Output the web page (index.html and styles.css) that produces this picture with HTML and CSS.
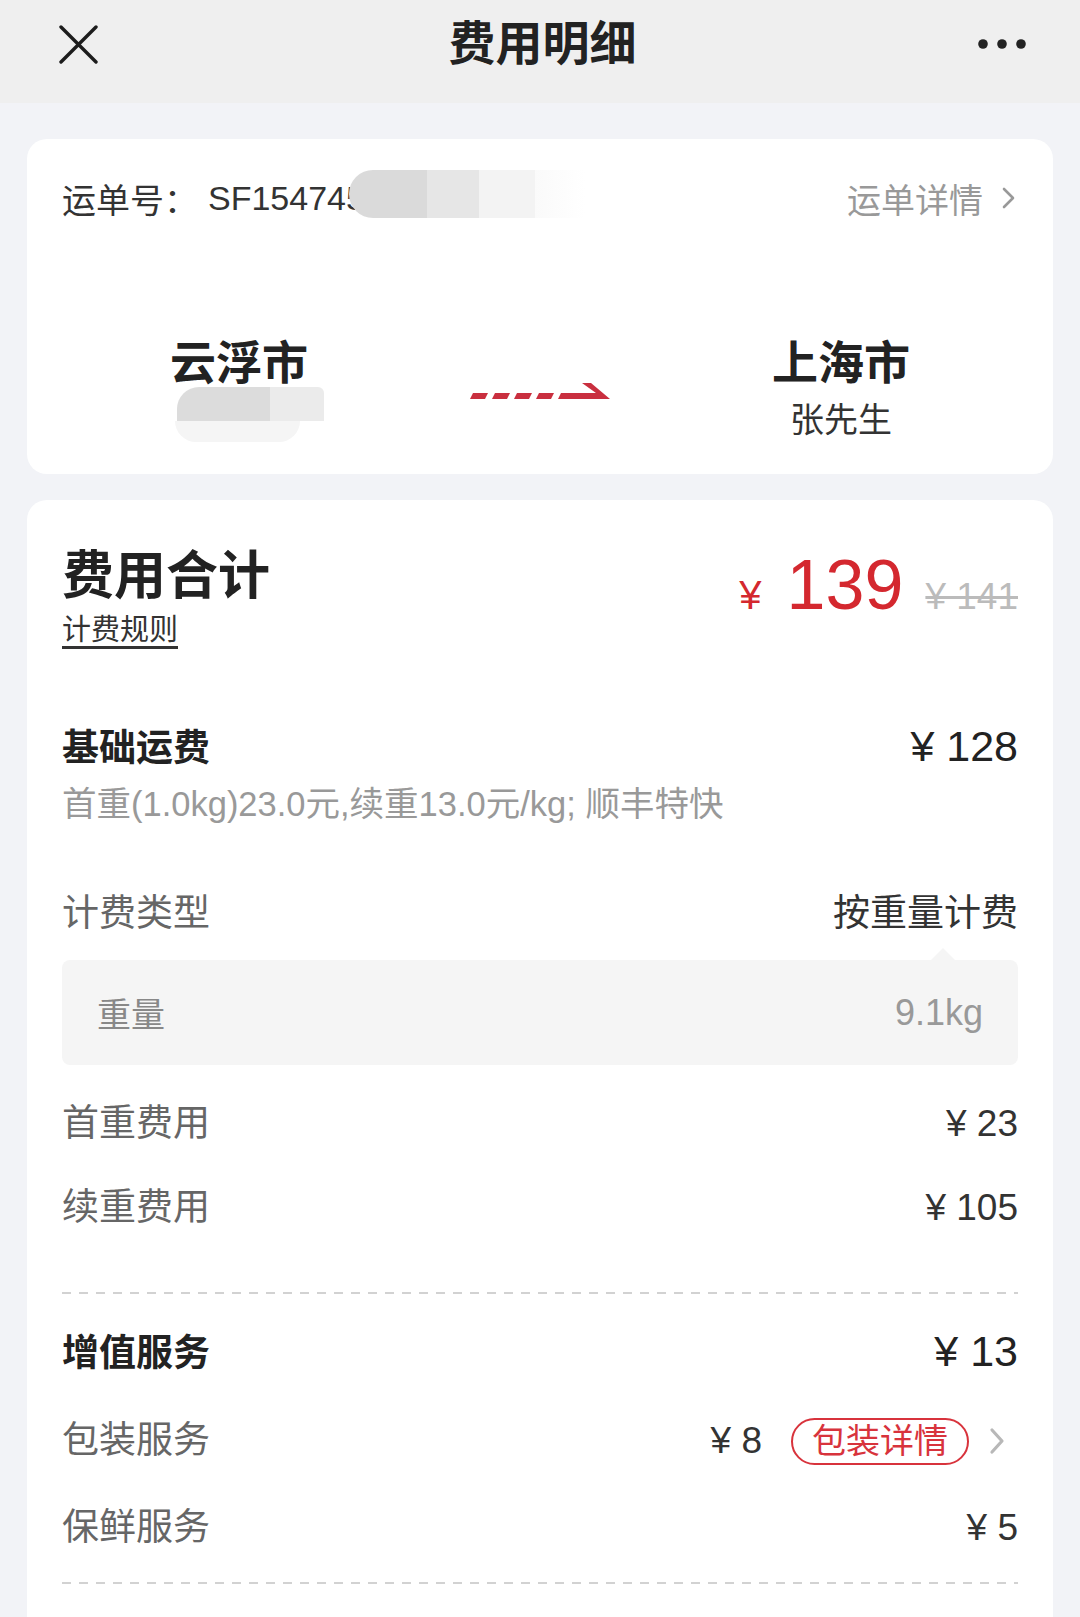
FILE: index.html
```html
<!DOCTYPE html>
<html lang="zh-CN">
<head>
<meta charset="utf-8">
<title>费用明细</title>
<link rel="stylesheet" href="styles.css">
</head>
<body>
<header class="topbar">
  <div class="topbar-row">
    <svg class="icon-close" width="39" height="39" viewBox="0 0 39 39"><path d="M2 2 L37 37 M37 2 L2 37" stroke="#1c1c1c" stroke-width="3.4" stroke-linecap="round" fill="none"/></svg>
    <h1 class="title">费用明细</h1>
    <svg class="icon-more" width="48" height="10" viewBox="0 0 48 10"><circle cx="5" cy="5" r="4.8" fill="#222"/><circle cx="24" cy="5" r="4.8" fill="#222"/><circle cx="43" cy="5" r="4.8" fill="#222"/></svg>
  </div>
</header>

<section class="card card-waybill">
  <div class="waybill-row">
    <div class="waybill-no">
      <span class="waybill-label">运单号：</span><span class="waybill-num">SF154745</span><span class="mask mask-no"></span>
    </div>
    <a class="waybill-link">运单详情<svg class="chev" width="14" height="24" viewBox="0 0 14 24"><polyline points="2,3 11,12 2,21" fill="none" stroke="#999" stroke-width="2.6" stroke-linecap="round" stroke-linejoin="round"/></svg></a>
  </div>
  <div class="route">
    <div class="route-end">
      <div class="city">云浮市</div>
      <span class="mask mask-a"></span>
      <span class="mask mask-b"></span>
    </div>
    <div class="route-arrow">
      <svg width="140" height="18" viewBox="0 0 140 18"><g fill="#c92f3f"><polygon points="3,11 18,11 15,17 0,17"/><polygon points="25,11 40,11 37,17 22,17"/><polygon points="47,11 62,11 59,17 44,17"/><polygon points="69,11 84,11 81,17 66,17"/><polygon points="91,11 126,11 112,1 121,1 140,17 88,17"/></g></svg>
    </div>
    <div class="route-end">
      <div class="city">上海市</div>
      <div class="person">张先生</div>
    </div>
  </div>
</section>

<section class="card card-fee">
  <div class="total">
    <div class="total-left">
      <div class="total-title">费用合计</div>
      <a class="rule">计费规则</a>
    </div>
    <div class="total-price">
      <span class="cur">¥</span><span class="big">139</span><span class="orig">¥ 141</span>
    </div>
  </div>

  <div class="row mt-base"><span class="label-strong">基础运费</span><span class="amt-strong">¥ 128</span></div>
  <div class="desc">首重(1.0kg)23.0元,续重13.0元/kg; 顺丰特快</div>

  <div class="row mt-type"><span class="label">计费类型</span><span class="value">按重量计费</span></div>
  <div class="weight-box"><span class="weight-label">重量</span><span class="weight-value">9.1kg</span></div>

  <div class="row mt-34"><span class="label">首重费用</span><span class="amt">¥ 23</span></div>
  <div class="row mt-34"><span class="label">续重费用</span><span class="amt">¥ 105</span></div>

  <div class="dash mt-dash1"></div>

  <div class="row mt-added"><span class="label-strong">增值服务</span><span class="amt-strong">¥ 13</span></div>
  <div class="row row-center mt-pack">
    <span class="label">包装服务</span>
    <span class="pack-right"><span class="amt">¥ 8</span><span class="pill">包装详情</span><svg class="pack-chev" width="18" height="30" viewBox="0 0 18 30"><polyline points="4,4 14,15 4,26" fill="none" stroke="#b8b8b8" stroke-width="3.2" stroke-linecap="round" stroke-linejoin="round"/></svg></span>
  </div>
  <div class="row mt-fresh"><span class="label">保鲜服务</span><span class="amt">¥ 5</span></div>

  <div class="dash mt-dash2"></div>
</section>
</body>
</html>
```

FILE: styles.css
```css
html, body {
  margin: 0;
  padding: 0;
}

body {
  background: #f2f3f7;
  font-family: "Liberation Sans", "Noto Sans CJK SC", sans-serif;
  color: #333;
}

.topbar {
  background: #efefef;
  height: 103px;
}

.topbar-row {
  height: 88px;
  display: grid;
  grid-template-columns: 1fr auto 1fr;
  align-items: center;
  padding: 0 54px 0 59px;
}

.title {
  margin: 0;
  font-size: 47px;
  line-height: 60px;
  font-weight: 700;
  color: #222;
}

.icon-close {
  justify-self: start;
}

.icon-more {
  justify-self: end;
}

.card {
  background: #fff;
  border-radius: 20px;
  margin: 0 27px;
  padding: 0 35px;
}

.card-waybill {
  margin-top: 36px;
  padding-top: 35px;
  padding-bottom: 32px;
}

.waybill-row {
  display: flex;
  justify-content: space-between;
  align-items: center;
  height: 48px;
}

.waybill-no {
  display: flex;
  align-items: center;
  font-size: 34px;
  color: #333;
}

.waybill-num {
  margin-left: 10px;
}

.mask-no {
  display: block;
  width: 236px;
  height: 48px;
  margin-left: -16px;
  margin-top: -8px;
  background: linear-gradient(90deg, #dadada 0 78px, #e6e6e6 78px 130px, #f3f3f3 130px 186px, #fafafa 186px, rgba(255, 255, 255, 0) 236px);
  border-radius: 24px 0 0 24px;
}

.waybill-link {
  display: flex;
  align-items: center;
  font-size: 34px;
  color: #999;
  text-decoration: none;
  margin-right: 2px;
}

.chev {
  margin-left: 19px;
}

.route {
  display: grid;
  grid-template-columns: 1fr 200px 1fr;
  grid-template-rows: 109px;
  margin: 111px -24px 0;
}

.route-end {
  display: flex;
  flex-direction: column;
  align-items: center;
}

.city {
  font-size: 46px;
  line-height: 60px;
  font-weight: 700;
  color: #222;
}

.person {
  font-size: 34px;
  line-height: 44px;
  margin-top: 5px;
  color: #333;
}

.mask-a {
  display: block;
  width: 147px;
  height: 52px;
  margin-top: -6px;
  margin-left: 23px;
  background: linear-gradient(90deg, #dcdcdc 0 63%, #ebebeb 63%);
  border-radius: 22px 6px 0 0;
}

.mask-b {
  display: block;
  width: 125px;
  height: 32px;
  margin-left: -3px;
  background: #f5f5f5;
  border-radius: 0 0 40px 40px;
}

.route-arrow {
  display: flex;
  justify-content: center;
  align-items: flex-start;
  padding-top: 49px;
}

.card-fee {
  margin-top: 26px;
  padding-top: 44px;
  padding-bottom: 80px;
}

.total {
  display: flex;
  justify-content: space-between;
  align-items: flex-start;
}

.total-left {
  display: flex;
  flex-direction: column;
  align-items: flex-start;
}

.total-title {
  font-size: 52px;
  line-height: 64px;
  font-weight: 700;
  color: #222;
}

.rule {
  font-size: 29px;
  line-height: 32px;
  margin-top: 6px;
  border-bottom: 3px solid #333;
  color: #333;
}

.total-price {
  display: flex;
  align-items: baseline;
  margin-top: 6px;
}

.cur {
  font-size: 40px;
  color: #d4282f;
}

.big {
  font-size: 70px;
  line-height: 70px;
  color: #d4282f;
  margin-left: 25px;
}

.orig {
  font-size: 37px;
  color: #bbb;
  text-decoration: line-through;
  margin-left: 22px;
}

.row {
  display: flex;
  justify-content: space-between;
  align-items: baseline;
  line-height: 50px;
}

.row-center {
  align-items: center;
}

.label {
  font-size: 37px;
  color: #666;
}

.label-strong {
  font-size: 37px;
  font-weight: 700;
  color: #222;
}

.value {
  font-size: 37px;
  color: #333;
}

.amt {
  font-size: 37px;
  color: #333;
}

.amt-strong {
  font-size: 43px;
  color: #222;
}

.desc {
  font-size: 34.5px;
  line-height: 44px;
  color: #999;
  margin-top: 8px;
}

.mt-base { margin-top: 72px; }
.mt-type { margin-top: 63px; }
.mt-34 { margin-top: 34px; }
.mt-dash1 { margin-top: 59px; }
.mt-added { margin-top: 32px; }
.mt-pack { margin-top: 37px; }
.mt-fresh { margin-top: 37px; }
.mt-dash2 { margin-top: 29px; }

.weight-box {
  position: relative;
  margin-top: 21px;
  height: 105px;
  background: #f5f5f5;
  border-radius: 8px;
  display: flex;
  justify-content: space-between;
  align-items: center;
  padding: 0 35px;
}

.weight-box::before {
  content: "";
  position: absolute;
  top: -12px;
  right: 63px;
  border-left: 12px solid transparent;
  border-right: 12px solid transparent;
  border-bottom: 12px solid #f5f5f5;
}

.weight-label {
  font-size: 34px;
  color: #888;
}

.weight-value {
  font-size: 36px;
  color: #999;
}

.dash {
  height: 2px;
  background: repeating-linear-gradient(90deg, #d2d2d2 0 9px, transparent 9px 17px);
}

.pack-right {
  display: flex;
  align-items: center;
}

.pill {
  display: inline-flex;
  align-items: center;
  box-sizing: border-box;
  height: 47px;
  margin-left: 29px;
  padding: 0 19px;
  border: 2px solid #d8333c;
  border-radius: 24px;
  font-size: 34px;
  line-height: 43px;
  color: #d8333c;
}

.pack-chev {
  margin-left: 19px;
  margin-right: 12px;
}
```
